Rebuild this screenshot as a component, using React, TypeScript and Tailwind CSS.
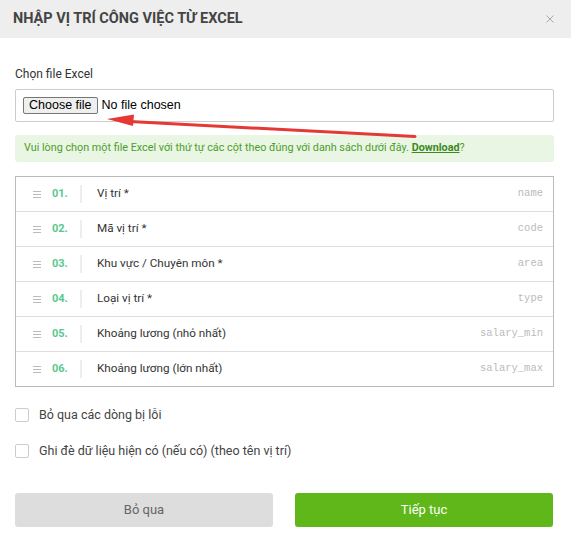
import React from "react";

const columns = [
  { no: "01.", label: "Vị trí *", key: "name" },
  { no: "02.", label: "Mã vị trí *", key: "code" },
  { no: "03.", label: "Khu vực / Chuyên môn *", key: "area" },
  { no: "04.", label: "Loại vị trí *", key: "type" },
  { no: "05.", label: "Khoảng lương (nhỏ nhất)", key: "salary_min" },
  { no: "06.", label: "Khoảng lương (lớn nhất)", key: "salary_max" },
];

function DragHandle() {
  return (
    <svg width="8" height="7" viewBox="0 0 8 7" className="block shrink-0">
      <path d="M0 0.5H8M0 3.5H8M0 6.5H8" stroke="#bbbbbb" strokeWidth="1" />
    </svg>
  );
}

function Checkbox({ label }: { label: string }) {
  return (
    <label className="flex items-center h-[14px]">
      <span className="w-[14px] h-[14px] border border-[#cccccc] rounded-[2px] bg-white shrink-0" />
      <span className="ml-[10px] text-[12.5px] text-[#444444] leading-none whitespace-nowrap">{label}</span>
    </label>
  );
}

export default function App() {
  return (
    <div className="relative w-[571px] h-[552px] bg-white font-['Roboto',sans-serif] overflow-hidden">
      {/* header */}
      <div className="h-[38px] bg-[#eeeeee] flex items-center justify-between pl-[13px] pr-[17px]">
        <h2 className="text-[14.5px] font-bold text-[#444444]">NHẬP VỊ TRÍ CÔNG VIỆC TỪ EXCEL</h2>
        <svg width="8" height="8" viewBox="0 0 8 8" className="mb-[1px]">
          <path d="M0.5 0.5L7.5 7.5M7.5 0.5L0.5 7.5" stroke="#aaaaaa" strokeWidth="1" />
        </svg>
      </div>

      <div className="pl-[15px] pr-[17px]">
        <div className="pt-[28px] text-[12px] leading-[16px] text-[#333333]">Chọn file Excel</div>

        <div className="mt-[7px] h-[33px] border border-[#cccccc] rounded-[2px] flex items-center pl-[7px] font-['Liberation_Sans',Arial,sans-serif]">
          <span className="h-[17px] px-[5px] flex items-center border border-[#767676] bg-[#efefef] rounded-[2px] text-[12.5px] text-black leading-none">
            Choose file
          </span>
          <span className="ml-[4px] text-[12.5px] text-black">No file chosen</span>
        </div>

        <div className="mt-[13px] h-[27px] bg-[#e8f6e3] rounded-[3px] flex items-center px-[9px] text-[10.8px] text-[#4e9d2c] whitespace-nowrap">
          <span>
            Vui lòng chọn một file Excel với thứ tự các cột theo đúng với danh sách dưới đây.{" "}
            <span className="font-bold underline text-[#3e8a1e]">Download</span>?
          </span>
        </div>

        <div className="mt-[14px] border border-[#bbbbbb]">
          {columns.map((c) => (
            <div
              key={c.key}
              className="h-[35px] border-t border-[#dddddd] first:h-[34px] first:border-t-0 flex items-center pl-[17px] pr-[10px]"
            >
              <DragHandle />
              <span className="ml-[11px] w-[28px] shrink-0 text-[11px] font-bold text-[#5ac88d]">{c.no}</span>
              <span className="w-[2px] h-[18px] shrink-0 bg-[#eeeeee]" />
              <span className="ml-[15px] flex-1 text-left text-[11.7px] text-[#333333] whitespace-nowrap">
                {c.label}
              </span>
              <span className="shrink-0 font-['Liberation_Mono',monospace] text-[10.5px] text-[#bbbbbb]">
                {c.key}
              </span>
            </div>
          ))}
        </div>

        <div className="mt-[21px] flex flex-col gap-[22px]">
          <Checkbox label="Bỏ qua các dòng bị lỗi" />
          <Checkbox label="Ghi đè dữ liệu hiện có (nếu có) (theo tên vị trí)" />
        </div>

        <div className="mt-[35px] flex gap-[22px]">
          <button className="w-[258px] h-[34px] bg-[#dddddd] rounded-[3px] text-[13px] text-[#666666]">
            Bỏ qua
          </button>
          <button className="w-[258px] h-[34px] bg-[#5fb71a] rounded-[3px] text-[13px] text-white">
            Tiếp tục
          </button>
        </div>
      </div>

      {/* red annotation arrow */}
      <svg className="absolute left-0 top-0 pointer-events-none" width="571" height="552" viewBox="0 0 571 552">
        <path d="M130 121.5L415 136.5" stroke="#e53935" strokeWidth="3" strokeLinecap="round" />
        <path d="M107 119L134 114.5L133 126Z" fill="#e53935" />
      </svg>
    </div>
  );
}
